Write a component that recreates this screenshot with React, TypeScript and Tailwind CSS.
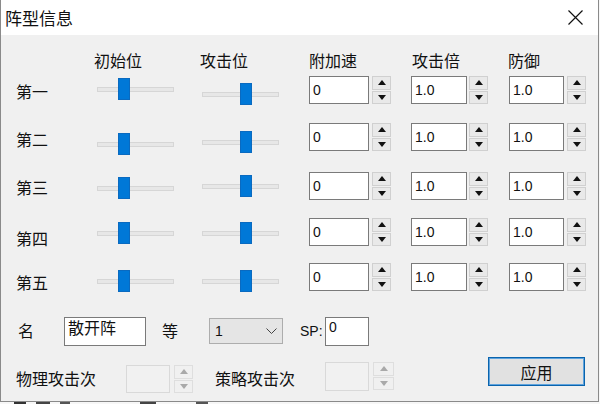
import React from "react";

const cjk = "font-['Microsoft_YaHei','Noto_Sans_CJK_SC',sans-serif]";
const num = "font-['Liberation_Sans',Arial,sans-serif]";

const rows = [
  { name: "第一", h: "h-[47px]", lab: "mt-[5px]", s1: "mt-[2px]", s2: "mt-[7px]" },
  { name: "第二", h: "h-[49px]", lab: "mt-[6px]", s1: "mt-[10px]", s2: "mt-[8px]" },
  { name: "第三", h: "h-[46px]", lab: "mt-[5px]", s1: "mt-[5px]", s2: "mt-[3px]" },
  { name: "第四", h: "h-[45px]", lab: "mt-[10px]", s1: "mt-[4px]", s2: "mt-[4px]" },
  { name: "第五", h: "h-[54px]", lab: "mt-[9px]", s1: "mt-[7px]", s2: "mt-[7px]" },
];

function Arrow({ up, disabled }: { up?: boolean; disabled?: boolean }) {
  return (
    <svg width="8" height="5" viewBox="0 0 8 5">
      <path d={up ? "M0 5 L4 0 L8 5 Z" : "M0 0 L8 0 L4 5 Z"} fill={disabled ? "#a9a9a9" : "#111"} />
    </svg>
  );
}

function SpinButtons({ disabled, w = "w-[19px]" }: { disabled?: boolean; w?: string }) {
  const cell = disabled
    ? "border-[#dedede] bg-[#f0f0f0]"
    : "border-[#d0d0d0] bg-[#e9e9e9]";
  return (
    <div className={`flex h-[28px] ${w} shrink-0 flex-col gap-[1px]`}>
      <div className={`flex flex-1 items-center justify-center border ${cell}`}>
        <Arrow up disabled={disabled} />
      </div>
      <div className={`flex flex-1 items-center justify-center border ${cell}`}>
        <Arrow disabled={disabled} />
      </div>
    </div>
  );
}

function Spin({ value, w, gap }: { value: string; w: string; gap: string }) {
  return (
    <div className={`flex shrink-0 ${gap}`}>
      <div
        className={`h-[28px] ${w} border border-[#7a7a7a] bg-white px-[3px] text-[14px] leading-[26px] text-[#111] ${num}`}
      >
        {value}
      </div>
      <SpinButtons />
    </div>
  );
}

function Slider({ pos, mt }: { pos: string; mt: string }) {
  return (
    <div className={`relative h-[22px] w-[77px] shrink-0 ${mt}`}>
      <div className="absolute left-0 right-0 top-[9px] h-[5px] border border-[#d6d6d6] bg-[#e7e7e7]" />
      <div className={`absolute top-0 h-[22px] w-[12px] border border-[#0a6ac0] bg-[#0078d7] ${pos}`} />
    </div>
  );
}

export default function App() {
  return (
    <div className={`h-[404px] w-[600px] overflow-hidden bg-[#f7f7f7] text-[#111] ${cjk}`}>
      <div className="flex h-[402px] w-[599px] flex-col border-x border-b border-[#8a8a8a]">
        {/* title bar */}
        <div className="flex h-[35px] shrink-0 items-center justify-between bg-white">
          <span className="ml-[4px] text-[17px] leading-[22px]">阵型信息</span>
          <svg className="mr-[15px]" width="15" height="15" viewBox="0 0 15 15">
            <path d="M0.5 0.5 L14.5 14.5 M14.5 0.5 L0.5 14.5" stroke="#111" strokeWidth="1.2" />
          </svg>
        </div>

        <div className="flex flex-1 flex-col bg-[#f0f0f0]">
          {/* headers */}
          <div className="mt-[15px] flex h-[20px] text-[16px] leading-[20px]">
            <span className="ml-[93px] w-[106px]">初始位</span>
            <span className="w-[109px]">攻击位</span>
            <span className="w-[103px]">附加速</span>
            <span className="w-[96px]">攻击倍</span>
            <span>防御</span>
          </div>

          {/* formation rows */}
          <div className="mt-[6px] flex flex-col">
            {rows.map((r) => (
              <div key={r.name} className={`flex items-start ${r.h}`}>
                <span className={`ml-[15px] w-[32px] shrink-0 text-[16px] leading-[20px] ${r.lab}`}>{r.name}</span>
                <div className="ml-[49px]">
                  <Slider pos="left-[21px]" mt={r.s1} />
                </div>
                <div className="ml-[28px]">
                  <Slider pos="left-[38px]" mt={r.s2} />
                </div>
                <div className="ml-[30px]">
                  <Spin value="0" w="w-[60px]" gap="gap-[3px]" />
                </div>
                <div className="ml-[20px]">
                  <Spin value="1.0" w="w-[56px]" gap="gap-[2px]" />
                </div>
                <div className="ml-[21px]">
                  <Spin value="1.0" w="w-[55px]" gap="gap-[3px]" />
                </div>
              </div>
            ))}
          </div>

          {/* name / level / SP */}
          <div className="flex h-[40px] items-start">
            <span className="ml-[17px] mt-[3px] w-[46px] text-[16px] leading-[20px]">名</span>
            <div className="h-[29px] w-[82px] border border-[#7a7a7a] bg-white pl-[3px] text-[16px] leading-[18px]">
              散开阵
            </div>
            <span className="ml-[16px] mt-[3px] w-[47px] text-[16px] leading-[20px]">等</span>
            <div className="mt-[1px] flex h-[26px] w-[74px] items-center justify-between border border-[#adadad] bg-[#e5e5e5] pl-[5px] pr-[5px]">
              <span className={`text-[14px] leading-[16px] ${num}`}>1</span>
              <svg width="11" height="6" viewBox="0 0 11 6">
                <path d="M0.5 0.5 L5.5 5.5 L10.5 0.5" fill="none" stroke="#444" strokeWidth="1" />
              </svg>
            </div>
            <span className={`ml-[17px] mt-[5px] w-[25px] text-[14px] leading-[18px] ${num}`}>SP:</span>
            <div className={`h-[29px] w-[44px] border border-[#7a7a7a] bg-white pl-[3px] text-[14px] leading-[18px] ${num}`}>
              0
            </div>
          </div>

          {/* attack counts / apply */}
          <div className="flex items-start">
            <span className="ml-[15px] mt-[11px] w-[110px] text-[16px] leading-[20px]">物理攻击次</span>
            <div className="mt-[8px] flex gap-[4px]">
              <div className="h-[28px] w-[44px] border border-[#d9d9d9] bg-[#f1f1f1]" />
              <SpinButtons disabled />
            </div>
            <span className="ml-[22px] mt-[11px] w-[110px] text-[16px] leading-[20px]">策略攻击次</span>
            <div className="mt-[5px] flex gap-[4px]">
              <div className="h-[29px] w-[44px] border border-[#d9d9d9] bg-[#f1f1f1]" />
              <SpinButtons disabled w="w-[21px]" />
            </div>
            <button className="ml-[94px] flex h-[29px] w-[97px] items-center justify-center border border-[#0a64ad] bg-[#e1e1e1] text-[16px] leading-[20px] shadow-[inset_0_0_0_1px_#5fa3dd]">
              应用
            </button>
          </div>
        </div>
      </div>
      <div className="flex h-[2px] gap-[10px] pl-[14px]">
        <span className="w-[12px] bg-[#333]" />
        <span className="w-[14px] bg-[#444]" />
        <span className="w-[10px] bg-[#555]" />
        <span className="ml-[60px] w-[16px] bg-[#444]" />
        <span className="ml-[30px] w-[12px] bg-[#555]" />
      </div>
    </div>
  );
}
